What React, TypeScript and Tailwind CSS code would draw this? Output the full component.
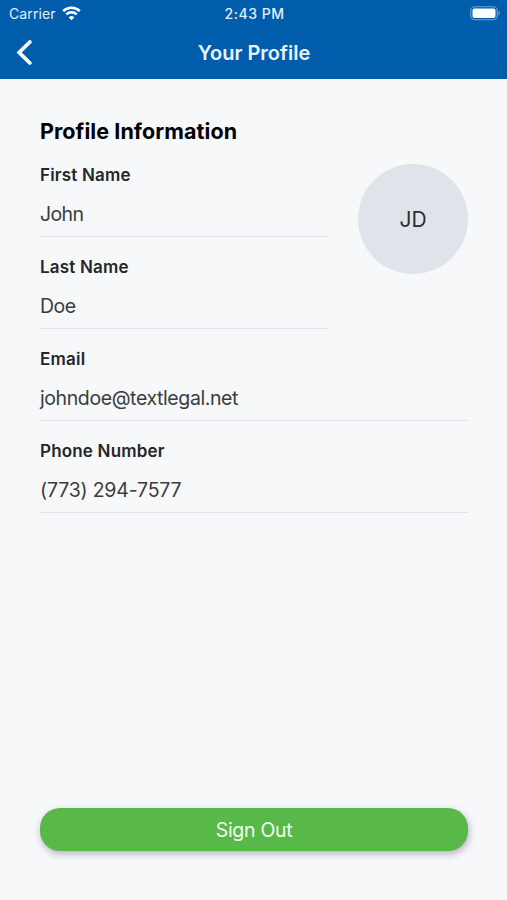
import clsx from 'clsx';

const nameFields = [
  { label: 'First Name', value: 'John', labelClass: 'tracking-[0.2px]', valueClass: 'tracking-[-0.6px]' },
  { label: 'Last Name', value: 'Doe', labelClass: 'tracking-[0.2px]', valueClass: 'tracking-[-0.5px]' },
];

const contactFields = [
  { label: 'Email', value: 'johndoe@textlegal.net', labelClass: 'tracking-[0.25px]', valueClass: 'tracking-[-0.4px]' },
  { label: 'Phone Number', value: '(773) 294-7577', labelClass: 'tracking-[0.18px]', valueClass: 'tracking-[-0.2px]' },
];

type FieldProps = { label: string; value: string; labelClass: string; valueClass: string };

function Field({ label, value, labelClass, valueClass }: FieldProps) {
  return (
    <div className="border-b border-[#e3e5e8] pt-px pb-2.5">
      <div className={clsx('text-[17px] leading-5 font-semibold text-[#242628]', labelClass)}>{label}</div>
      <div className={clsx('mt-[17px] text-[19.5px] leading-6 text-[#3a3c3e]', valueClass)}>{value}</div>
    </div>
  );
}

function StatusBar() {
  return (
    <div className="grid h-[27px] grid-cols-[1fr_auto_1fr] items-center pl-[9px] pr-[7px] text-[#e3f0fb]">
      <div className="flex items-center gap-[6px]">
        <span className="text-[14px] leading-5 tracking-[0.1px]">Carrier</span>
        <svg width="19" height="15" viewBox="0 0 19 15" fill="none" stroke="white" strokeWidth="2.5">
          <path d="M1.2 5.1a11.8 11.8 0 0 1 16.6 0" />
          <path d="M4.3 8.4a7.4 7.4 0 0 1 10.4 0" />
          <path d="M9.5 14.2 6.7 11.4a4 4 0 0 1 5.6 0z" fill="white" stroke="none" />
        </svg>
      </div>
      <span className="text-[14px] leading-5 font-medium tracking-[0.5px]">2:43 PM</span>
      <svg className="justify-self-end" width="30" height="15" viewBox="0 0 30 15">
        <rect x="0.75" y="0.75" width="26.5" height="13" rx="4" fill="none" stroke="#6ba3d8" strokeWidth="1.1" />
        <rect x="2.5" y="2.6" width="23" height="9.3" rx="2" fill="white" />
        <path d="M28.5 5v4.5c.9-.4 1.4-1.2 1.4-2.25S29.4 5.4 28.5 5z" fill="#6ba3d8" />
      </svg>
    </div>
  );
}

export default function App() {
  return (
    <div className="flex h-[900px] w-[507px] flex-col bg-[#f7f8fa] font-['Inter',sans-serif]">
      <header className="h-[79px] bg-[#005dac]">
        <StatusBar />
        <div className="grid h-[51px] grid-cols-[60px_1fr_60px] items-center">
          <button className="pl-4" aria-label="Back">
            <svg width="17" height="26" viewBox="0 0 17 26" fill="none" stroke="white" strokeWidth="3.8" strokeLinecap="round">
              <path d="M13.8 2 3.2 12.5 13.8 23" />
            </svg>
          </button>
          <h1 className="pl-px text-center text-[20px] leading-6 font-semibold text-[#e8f4ff]">Your Profile</h1>
        </div>
      </header>

      <main className="flex flex-1 flex-col pt-10 pr-[39px] pb-[49px] pl-10">
        <h2 className="text-[21.5px] leading-6 font-bold tracking-[0.08px] text-black">Profile Information</h2>

        <div className="mt-[21px] flex items-start justify-between">
          <div className="flex w-[289px] flex-col gap-[19px]">
            {nameFields.map((field) => (
              <Field key={field.label} {...field} />
            ))}
          </div>
          <div className="flex size-[110px] items-center justify-center rounded-full bg-[#dfe4ea] pt-px text-[21px] text-[#2b2d30]">
            JD
          </div>
        </div>

        <div className="mt-[19px] flex flex-col gap-[19px]">
          {contactFields.map((field) => (
            <Field key={field.label} {...field} />
          ))}
        </div>

        <button className="mt-auto h-[43px] rounded-[20px] bg-[#58b848] pt-0.5 text-[19.5px] tracking-[-0.3px] text-[#f0fff0] shadow-[1px_3px_7px_rgba(50,50,80,0.35)]">
          Sign Out
        </button>
      </main>
    </div>
  );
}
